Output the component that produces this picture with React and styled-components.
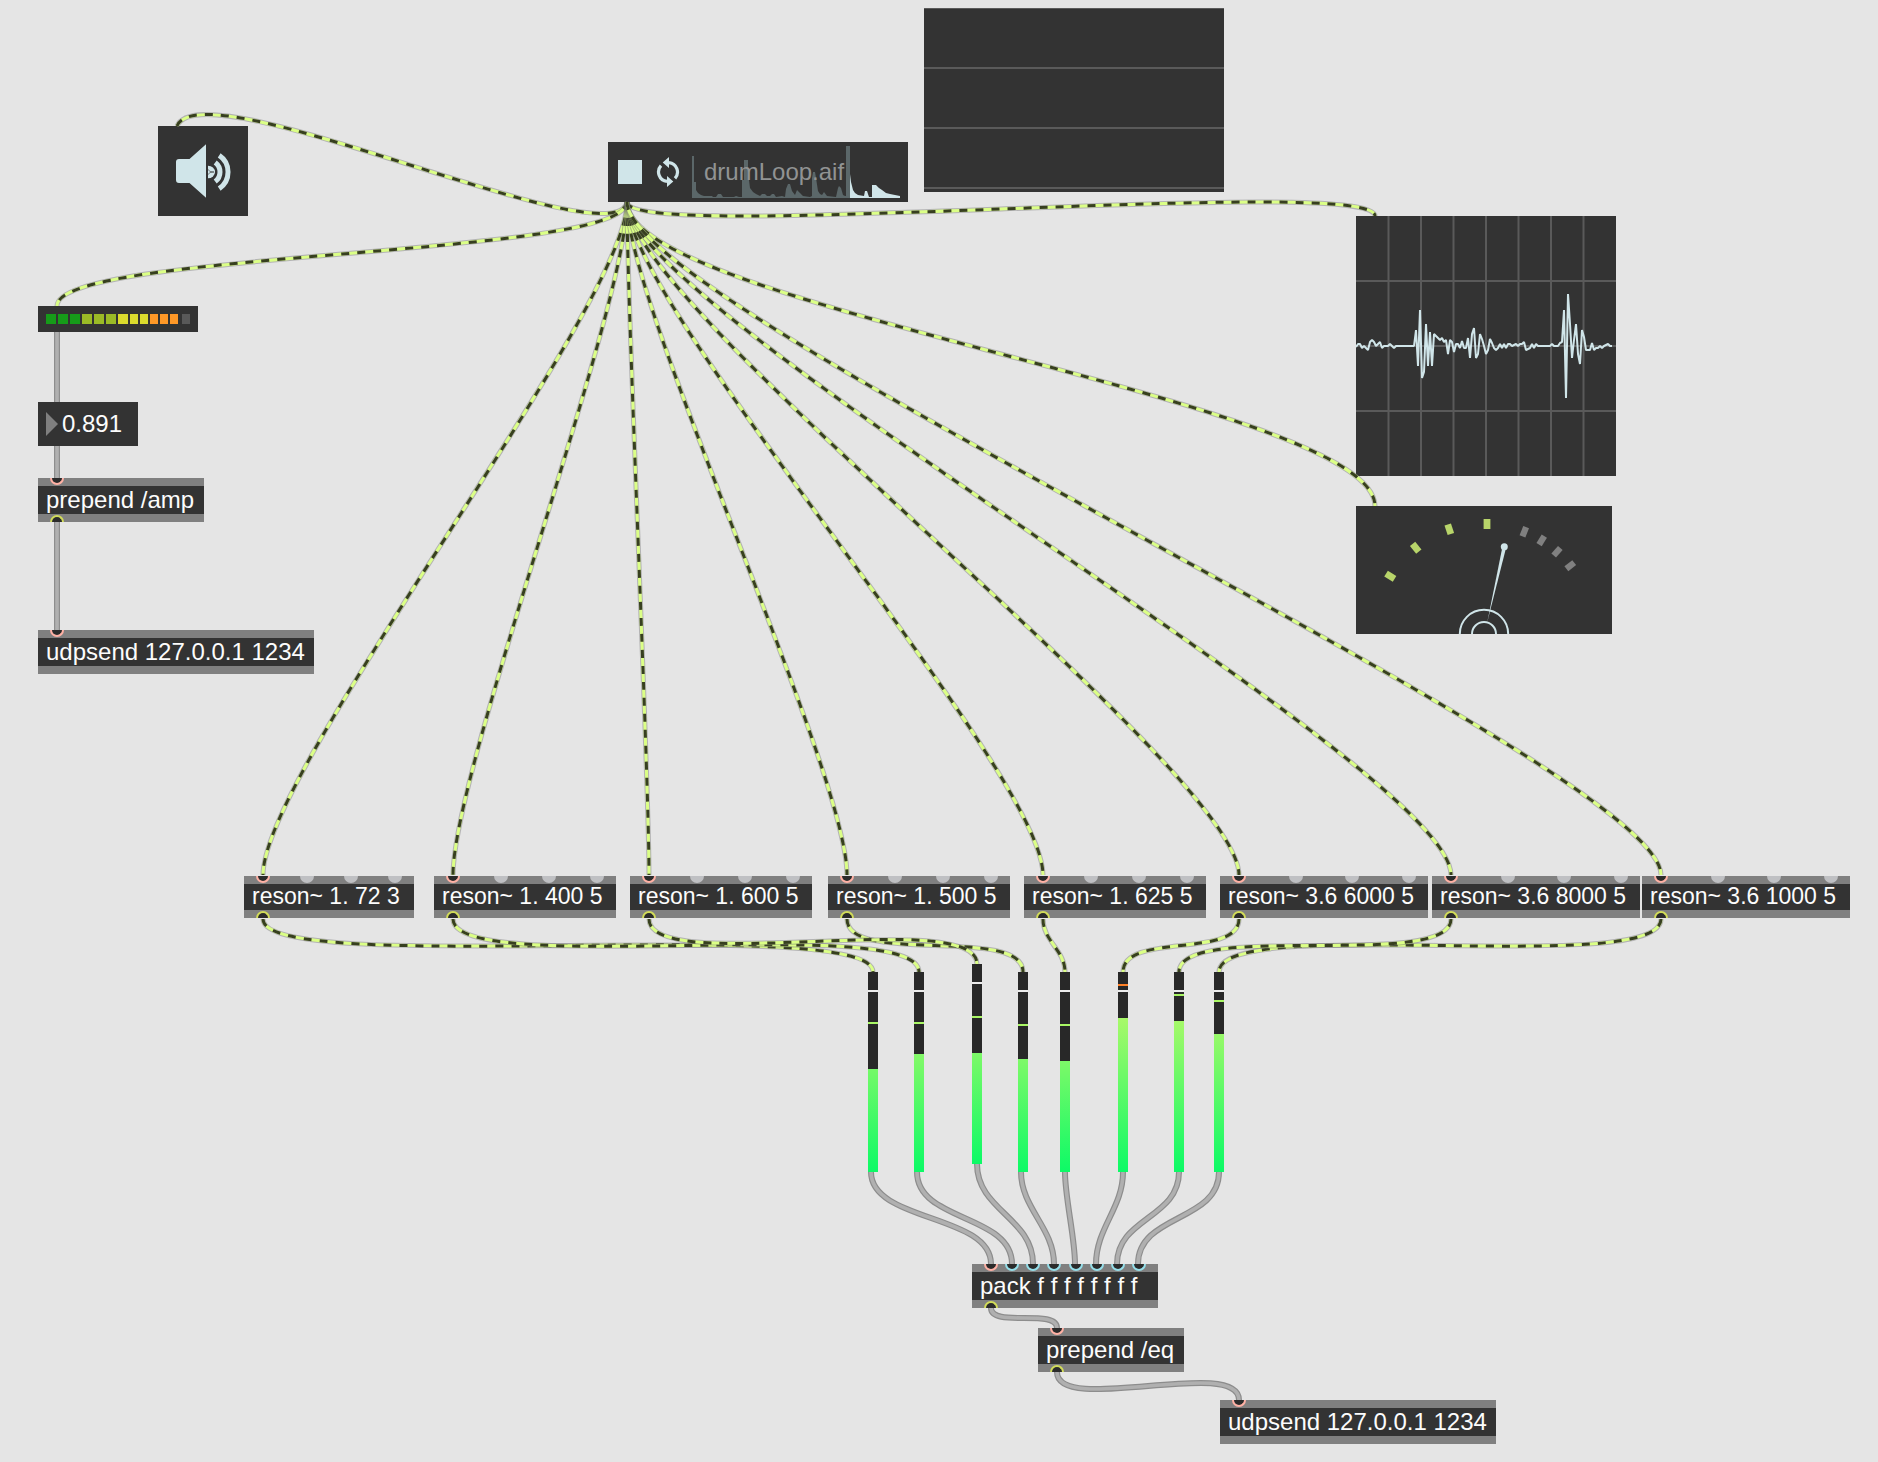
import React, { useState } from "react";
import styled, { createGlobalStyle, css } from "styled-components";

const GlobalStyle = createGlobalStyle`
  *, *::before, *::after { box-sizing: border-box; }
  body {
    margin: 0;
    background: #e5e5e5;
    font-family: "Liberation Sans", Arial, sans-serif;
    font-size: 24px;
    color: #fcfcfc;
  }
  button, input { font: inherit; color: inherit; }
`;

const PANEL = "#333333";
const BAR = "#808080";
const GRID = "#5a5a5a";
const ICE = "#d0e5e9";

const Canvas = styled.main`
  position: relative;
  min-height: 100vh;
  overflow: hidden;
`;

/* Objects are placed freely on the patcher canvas. */
const placed = css`
  position: absolute;
  left: ${(p) => p.$x}px;
  top: ${(p) => p.$y}px;
`;

const Cords = styled.svg`
  position: absolute;
  left: 0;
  top: 0;
  width: 100%;
  height: 100%;
  pointer-events: none;
`;

/* ---------- object boxes ---------- */

const ObjectFrame = styled.div`
  ${placed}
  width: ${(p) => p.$w}px;
  background: ${PANEL};
`;

const PortBar = styled.div`
  display: flex;
  justify-content: space-between;
  align-items: ${(p) => (p.$out ? "flex-end" : "flex-start")};
  height: 8px;
  padding: 0 12px;
  background: ${BAR};
`;

const portColors = { hot: "#ffb1a5", cold: "#95dfea", out: "#d2dc5a" };

const Port = styled.span`
  width: 14px;
  height: 7px;
  border: 2px solid ${(p) => portColors[p.$kind] || "#bfc0c3"};
  background: ${(p) => (portColors[p.$kind] ? "#2b2b2b" : "#bfc0c3")};
  ${(p) =>
    p.$kind === "out"
      ? "border-bottom: 0; border-radius: 7px 7px 0 0;"
      : "border-top: 0; border-radius: 0 0 7px 7px;"}
`;

const ObjectText = styled.div`
  height: ${(p) => (p.$compact ? 26 : 28)}px;
  line-height: ${(p) => (p.$compact ? 24 : 28)}px;
  font-size: ${(p) => (p.$compact ? 23 : 24)}px;
  padding: 0 8px;
  white-space: nowrap;
`;

function PatchObject({ x, y, w, text, inlets = ["hot"], outlet = true, compact = false }) {
  return (
    <ObjectFrame $x={x} $y={y} $w={w}>
      <PortBar>
        {inlets.map((kind, i) => (
          <Port key={i} $kind={kind} />
        ))}
      </PortBar>
      <ObjectText $compact={compact}>{text}</ObjectText>
      <PortBar $out>{outlet && <Port $kind="out" />}</PortBar>
    </ObjectFrame>
  );
}

/* ---------- speaker toggle ---------- */

const SpeakerButton = styled.button`
  ${placed}
  display: block;
  width: 90px;
  height: 90px;
  padding: 0;
  border: 0;
  background: ${PANEL};
`;

function Speaker({ x, y }) {
  return (
    <SpeakerButton $x={x} $y={y} type="button" aria-label="Audio on">
      <svg width="90" height="90" viewBox="0 0 90 90" display="block" fill={ICE}>
        <path d="M21 33 H31.5 L48 18.3 V71.7 L31.5 57 H21 Q18 57 18 54 V36 Q18 33 21 33 Z" />
        <path d="M50 39.7 A7 6.3 0 0 1 50 52.3 Z" />
        <path d="M50 43.5 L52 45.4 L56 46 L52 46.6 L50 48.5" fill="none" stroke={PANEL} strokeWidth=".6" />
        <g fill="none" stroke={ICE}>
          <path d="M57.2 36.4 A12 12 0 0 1 57.2 55.6" strokeWidth="5" />
          <path d="M61.2 29.4 A20 20 0 0 1 61.2 62.6" strokeWidth="5" />
        </g>
      </svg>
    </SpeakerButton>
  );
}

/* ---------- LED level ---------- */

const LedPanel = styled.div`
  ${placed}
  display: flex;
  gap: 2px;
  width: 160px;
  padding: 8px;
  background: ${PANEL};
`;

const Led = styled.span`
  width: ${(p) => (p.$narrow ? 8 : 10)}px;
  height: 10px;
  background: ${(p) => p.$color};
  &:last-child { margin-left: 2px; }
`;

const leds = [
  ...Array(3).fill("#169b19"),
  ...Array(3).fill("#9bbb26"),
  ...Array(3).fill("#dbdb2d"),
  ...Array(3).fill("#ff9827"),
  "#595959",
];

/* ---------- number box ---------- */

const NumberBox = styled.label`
  ${placed}
  display: flex;
  align-items: center;
  gap: 4px;
  width: 100px;
  height: 44px;
  padding: 0 8px;
  background: ${PANEL};
`;

const NumberInput = styled.input`
  flex: 1;
  min-width: 0;
  height: 28px;
  padding: 0;
  border: 0;
  outline: 0;
  background: none;
`;

/* ---------- playlist ---------- */

const PlayerFrame = styled.section`
  ${placed}
  display: flex;
  align-items: center;
  width: 300px;
  height: 60px;
  padding: 0 8px 0 10px;
  background: ${PANEL};
`;

const StopButton = styled.button`
  width: 24px;
  height: 24px;
  padding: 0;
  border: 0;
  background: ${ICE};
`;

const LoopButton = styled.button`
  display: block;
  width: 24px;
  height: 30px;
  margin: 0 12px 0 14px;
  padding: 0;
  border: 0;
  background: none;
  svg { display: block; }
`;

const Clip = styled.div`
  position: relative;
  flex: 1;
  height: 52px;
  svg { display: block; }
`;

const ClipName = styled.span`
  position: absolute;
  left: 12px;
  top: 12px;
  line-height: 28px;
  color: #919393;
`;

const played = [
  [0, 42], [2, 42], [2, 16], [4, 16], [4, 8], [6, 5], [9, 3], [12, 2], [20, 2], [21, 1], [24, 1],
  [26, 4], [29, 4], [31, 1], [42, 1], [44, 2], [47, 1], [50, 1], [50, 18], [52, 18], [52, 38],
  [56, 38], [56, 24], [57, 18], [58, 10], [61, 6], [64, 4], [68, 2], [70, 4], [73, 4], [75, 2],
  [78, 2], [80, 4], [82, 4], [84, 1], [90, 2], [93, 1], [94, 9], [96, 14], [98, 14], [100, 7],
  [103, 3], [105, 8], [108, 5], [111, 2], [118, 1], [120, 2], [120, 20], [121, 26], [123, 26],
  [124, 20], [126, 7], [128, 4], [130, 3], [132, 6], [135, 2], [144, 1], [146, 10], [147, 12],
  [149, 10], [151, 3], [153, 2], [154, 2], [154, 52], [158, 52],
];
const upcoming = [
  [158, 24], [159, 16], [161, 8], [163, 5], [166, 3], [172, 2], [173, 7], [175, 7], [177, 1],
  [180, 1], [180, 13], [184, 13], [187, 10], [190, 8], [194, 5], [198, 4], [203, 3], [208, 2],
];
const area = (pts) => {
  const first = pts[0][0];
  const last = pts[pts.length - 1][0];
  return `${first},52 ${pts.map(([px, h]) => `${px},${52 - h}`).join(" ")} ${last},52`;
};

function Player({ x, y }) {
  return (
    <PlayerFrame $x={x} $y={y} aria-label="Playlist">
      <StopButton type="button" aria-label="Stop" />
      <LoopButton type="button" aria-label="Loop">
        <svg width="24" height="30" viewBox="-12 -15 24 30">
          <g fill="none" stroke={ICE} strokeWidth="3.2">
            <path d="M1 -9.4 A9.5 9.5 0 0 1 7 6.4" />
            <path d="M-1 9.4 A9.5 9.5 0 0 1 -7 -6.4" />
          </g>
          <path d="M1 -15 V-4 L-5.3 -9.4 Z M-1 15 V4 L5.3 9.4 Z" fill={ICE} />
        </svg>
      </LoopButton>
      <Clip>
        <svg width="208" height="52" viewBox="0 0 208 52">
          <polygon points={area(played)} fill="#5b6769" />
          <polygon points={area(upcoming)} fill={ICE} />
        </svg>
        <ClipName>drumLoop.aif</ClipName>
      </Clip>
    </PlayerFrame>
  );
}

/* ---------- multislider ---------- */

const SliderPanel = styled.div`
  ${placed}
  display: flex;
  flex-direction: column;
  width: 300px;
  height: 184px;
  border-top: 1px solid ${GRID};
  background: ${PANEL};
`;

const SliderLane = styled.div`
  height: 60px;
  border-bottom: 2px solid ${GRID};
`;

/* ---------- scope ---------- */

const ScopePanel = styled.div`
  ${placed}
  background: ${PANEL};
  svg { display: block; }
`;

const samples = [
  -1, 2, 2, -2, 0, -2, -4, 4, 6, 4, 0, 2, 4, -2, 0, 0, 0, 2, 0, -2, 0, 0, 0, 0, 0, 0, 0, 0, 0, 0,
  16, -20, 36, -32, -26, 22, -20, 14, -20, 12, 10, 8, 6, 8, 4, 6, -8, 6, 4, -6, 2, 2, -2, 5, -2, -2,
  8, -12, 12, 18, -12, -8, 12, 7, 0, -8, -4, 7, 3, -2, -4, -2, 2, -2, 2, -2, 2, 2, 0, 1, 2, 0, 2, 2,
  4, -4, -3, -2, 2, -2, 2, 0, 0, 0, 0, 0, 0, 0, 2, 0, 0, 0, 3, 4, 36, -52, 52, 22, -12, 6, 22, -8,
  -18, 16, 9, -4, -4, -4, 3, -4, -2, -2, 0, -2, 0, 1, 2, 0, 0,
];

function Scope({ x, y }) {
  return (
    <ScopePanel $x={x} $y={y} role="img" aria-label="Scope">
      <svg width="260" height="260" viewBox="0 0 260 260">
        <g stroke={GRID} strokeWidth="2">
          {[1, 2, 3, 4, 5, 6, 7].map((i) => (
            <path key={i} d={`M${i * 32.5} 0 V260`} />
          ))}
          {[65, 130, 195].map((v) => (
            <path key={v} d={`M0 ${v} H260`} />
          ))}
        </g>
        <polyline
          points={samples.map((s, i) => `${i * 2},${130 - s}`).join(" ")}
          fill="none"
          stroke={ICE}
          strokeWidth="2"
          strokeLinejoin="bevel"
        />
      </svg>
    </ScopePanel>
  );
}

/* ---------- needle meter ---------- */

const ticks = [
  [34.3, 70.3, true], [59.7, 41.7, true], [93.3, 23.3, true], [131, 18, true],
  [168.3, 25.7, false], [185.7, 34.3, false], [201, 45.7, false], [214.3, 59.7, false],
];

function NeedleMeter({ x, y }) {
  return (
    <ScopePanel $x={x} $y={y} role="img" aria-label="Signal meter">
      <svg width="256" height="128" viewBox="0 0 256 128">
        {ticks.map(([tx, ty, on]) => {
          const angle = (Math.atan2(tx - 128, 128 - ty) * 180) / Math.PI;
          const w = on ? 6.8 : 6.2;
          return (
            <rect
              key={tx}
              x={-w / 2}
              y={-5}
              width={w}
              height={10}
              fill={on ? "#b8d56a" : "#808080"}
              transform={`translate(${tx} ${ty}) rotate(${on && tx > 130 ? 0 : angle})`}
            />
          );
        })}
        <g fill="none" stroke={ICE} strokeWidth="2">
          <circle cx="128" cy="128" r="24.2" />
          <circle cx="128" cy="128" r="12" />
        </g>
        <path d="M131.3 116 L146.5 40.5 L150.2 41.3 Z" fill={ICE} />
        <circle cx="148.3" cy="40.7" r="3.5" fill={ICE} />
      </svg>
    </ScopePanel>
  );
}

/* ---------- level bars ---------- */

const LevelBar = styled.div`
  ${placed}
  width: 10px;
  height: 200px;
  background: linear-gradient(#282828 ${(p) => p.$level}px, transparent ${(p) => p.$level}px),
    linear-gradient(#d7f86a, #0cfa66);
`;

const LevelMark = styled.span`
  position: absolute;
  left: 0;
  top: ${(p) => p.$at}px;
  width: 100%;
  height: 2px;
  background: ${(p) => p.$color};
`;

const levels = [
  { x: 868, y: 972, level: 97, peak: 50 },
  { x: 914, y: 972, level: 82, peak: 50 },
  { x: 972, y: 964, level: 89, peak: 52 },
  { x: 1018, y: 972, level: 87, peak: 52 },
  { x: 1060, y: 972, level: 89, peak: 52 },
  { x: 1118, y: 972, level: 46, peak: 12, hot: true },
  { x: 1174, y: 972, level: 49, peak: 22 },
  { x: 1214, y: 972, level: 62, peak: 28 },
];

/* ---------- patch cords ---------- */

/* [x0, y0, x1, y1, slack, sway] */
const signalCords = [
  [627, 202, 177, 126, 60, 26],
  [627, 202, 57, 306, 56],
  [627, 202, 1375, 216, 42],
  [627, 202, 1375, 506, 105],
  [627, 202, 263, 875, 105],
  [627, 202, 453, 875, 105],
  [627, 202, 649, 875, 105],
  [627, 202, 847, 875, 105],
  [627, 202, 1043, 875, 105],
  [627, 202, 1239, 875, 105],
  [627, 202, 1451, 875, 108],
  [627, 202, 1661, 875, 108],
  [1661, 919, 1219, 972, 59],
  [1451, 919, 1179, 972, 52],
  [1239, 919, 1123, 972, 40],
  [1043, 919, 1065, 972, 22],
  [847, 919, 1023, 972, 47],
  [263, 919, 873, 972, 59],
  [453, 919, 919, 972, 60],
  [649, 919, 977, 964, 58],
];

const controlCords = [
  [57, 332, 57, 402, 0],
  [57, 446, 57, 478, 0],
  [57, 522, 57, 630, 0],
  [871, 1172, 991, 1264, 50],
  [917, 1172, 1012, 1264, 50],
  [977, 1164, 1033, 1264, 46],
  [1021, 1172, 1054, 1264, 36],
  [1065, 1172, 1075, 1264, 26],
  [1123, 1172, 1096, 1264, 36],
  [1179, 1172, 1117, 1264, 46],
  [1219, 1172, 1138, 1264, 50],
  [991, 1308, 1057, 1328, 20],
  [1057, 1372, 1239, 1400, 44],
];

const curve = ([x0, y0, x1, y1, d, sway = 0]) =>
  `M${x0} ${y0} C${x0 - sway / 2} ${y0 + d} ${x1 + sway} ${y1 - d} ${x1} ${y1}`;

function PatchCords() {
  return (
    <Cords aria-hidden="true">
      <g fill="none">
        {controlCords.map((c) => (
          <g key={c.join()}>
            <path d={curve(c)} stroke="#8d8d8d" strokeWidth="6" />
            <path d={curve(c)} stroke="#b0b0b0" strokeWidth="3.6" />
          </g>
        ))}
        {signalCords.map((c) => (
          <g key={c.join()}>
            <path d={curve(c)} stroke="rgba(110,110,110,.42)" strokeWidth="5" />
            <path d={curve(c)} stroke="#dbff86" strokeWidth="3" />
            <path d={curve(c)} stroke="#373f20" strokeWidth="3" strokeDasharray="8 8" />
          </g>
        ))}
      </g>
    </Cords>
  );
}

/* ---------- patch ---------- */

const filterInlets = ["hot", "idle", "idle", "idle"];
const filters = [
  { x: 244, w: 170, text: "reson~ 1. 72 3" },
  { x: 434, w: 182, text: "reson~ 1. 400 5" },
  { x: 630, w: 182, text: "reson~ 1. 600 5" },
  { x: 828, w: 182, text: "reson~ 1. 500 5" },
  { x: 1024, w: 182, text: "reson~ 1. 625 5" },
  { x: 1220, w: 208, text: "reson~ 3.6 6000 5" },
  { x: 1432, w: 208, text: "reson~ 3.6 8000 5" },
  { x: 1642, w: 208, text: "reson~ 3.6 1000 5" },
];

export default function App() {
  const [amp, setAmp] = useState("0.891");
  return (
    <>
      <GlobalStyle />
      <Canvas>
        <Speaker x={158} y={126} />
        <LedPanel $x={38} $y={306} role="img" aria-label="Input level">
          {leds.map((color, i) => (
            <Led key={i} $color={color} $narrow={i > 6} />
          ))}
        </LedPanel>
        <NumberBox $x={38} $y={402}>
          <svg width="12" height="24" viewBox="0 0 12 24" aria-hidden="true">
            <path d="M0 0 L12 12 L0 24 Z" fill={BAR} />
          </svg>
          <NumberInput aria-label="Amplitude" value={amp} onChange={(e) => setAmp(e.target.value)} />
        </NumberBox>
        <PatchObject x={38} y={478} w={166} text="prepend /amp" />
        <PatchObject x={38} y={630} w={276} text="udpsend 127.0.0.1 1234" outlet={false} />

        <Player x={608} y={142} />
        <SliderPanel $x={924} $y={8}>
          <SliderLane />
          <SliderLane />
          <SliderLane />
        </SliderPanel>
        <Scope x={1356} y={216} />
        <NeedleMeter x={1356} y={506} />

        {filters.map((f) => (
          <PatchObject key={f.x} x={f.x} y={876} w={f.w} text={f.text} inlets={filterInlets} compact />
        ))}

        {levels.map((l) => (
          <LevelBar key={l.x} $x={l.x} $y={l.y} $level={l.level} role="img" aria-label="Level">
            <LevelMark $at={18} $color="#ececec" />
            <LevelMark $at={l.peak} $color={l.hot ? "#ff8127" : "#a9f765"} />
          </LevelBar>
        ))}

        <PatchObject
          x={972}
          y={1264}
          w={186}
          text="pack f f f f f f f f"
          inlets={["hot", ...Array(7).fill("cold")]}
        />
        <PatchObject x={1038} y={1328} w={146} text="prepend /eq" />
        <PatchObject x={1220} y={1400} w={276} text="udpsend 127.0.0.1 1234" outlet={false} />
        <PatchCords />
      </Canvas>
    </>
  );
}
